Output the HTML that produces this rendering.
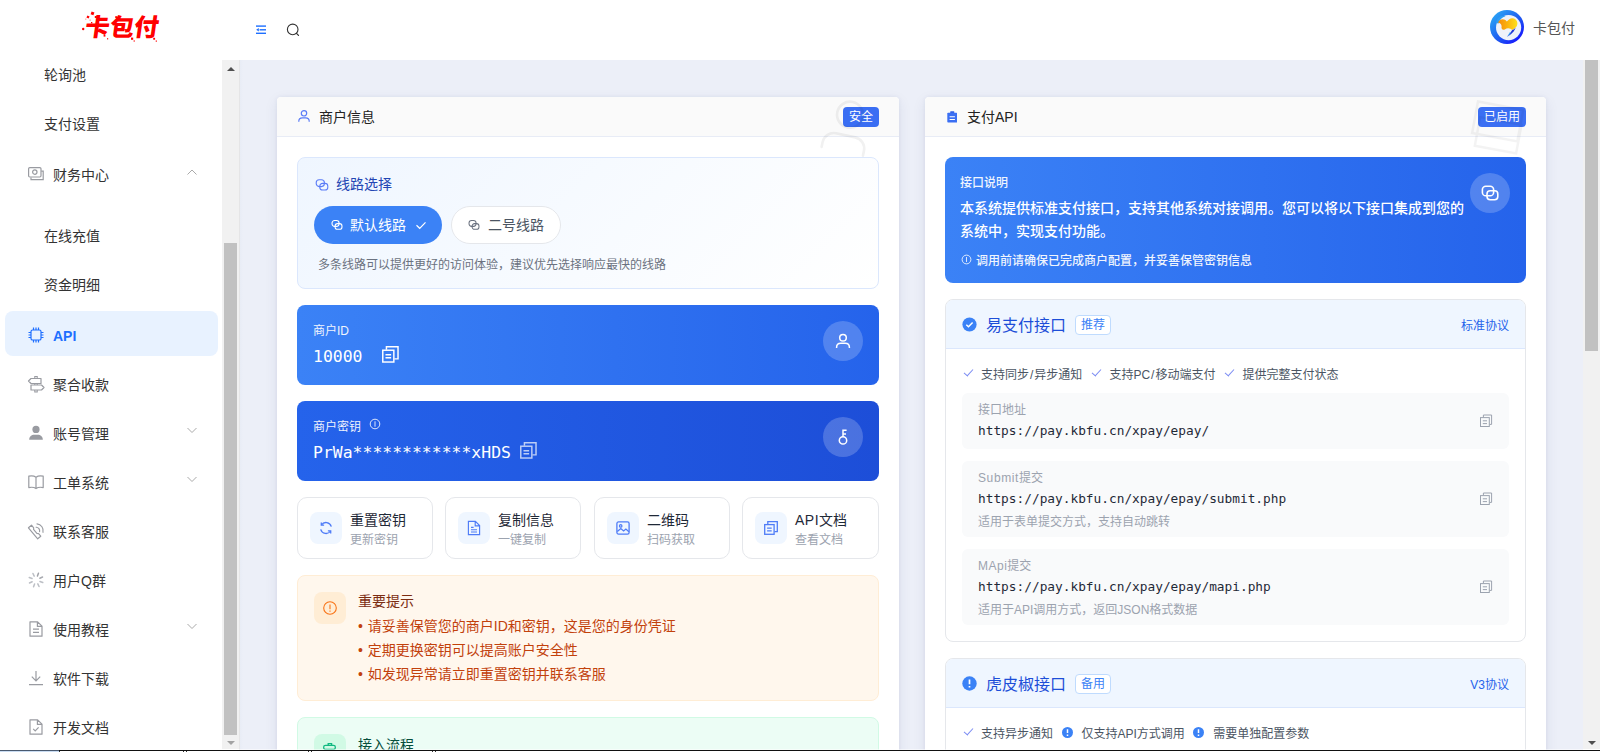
<!DOCTYPE html>
<html lang="zh-CN">
<head>
<meta charset="utf-8">
<title>卡包付 - API</title>
<style>
*{box-sizing:border-box;margin:0;padding:0}
html,body{width:1600px;height:752px;overflow:hidden;background:#fff}
body{position:relative;font-family:"Liberation Sans","Noto Sans CJK SC",sans-serif;font-size:14px;color:#333;-webkit-font-smoothing:antialiased}
.mono{font-family:"DejaVu Sans Mono","Liberation Mono",monospace}
svg{display:block}
.abs{position:absolute}

/* header */
#hdr{position:absolute;left:0;top:0;width:1600px;height:60px;background:#fff;z-index:5}
#logo{position:absolute;left:85px;top:8px;width:84px;height:40px;line-height:40px;font-family:"Liberation Sans","Noto Sans CJK SC",sans-serif;font-weight:900;font-size:24.500px;color:#f00;letter-spacing:0;white-space:nowrap;transform:skewX(-8deg)}
#uname{position:absolute;left:1533px;top:18px;font-size:14px;line-height:20px;color:#555}

/* sidebar */
#side{position:absolute;left:0;top:60px;width:222px;height:689px;background:#fff;overflow:hidden}
.mi{position:absolute;left:5px;width:213px;height:45px;line-height:44px;font-size:14px;color:#333;border-radius:8px}
.mi .tx{position:absolute;left:48px;top:3px;white-space:nowrap}
.mi.sub .tx{left:39px}
.mi .ic{position:absolute;left:22px;top:15px;width:18px;height:18px}
.mi .ar{position:absolute;left:181px;top:17px;width:12px;height:10px}
.mi.act{background:#e8f2ff;color:#1e6fff;font-weight:bold}
.sbar{position:absolute;background:#f1f1f1}
.sbar i{position:absolute;background:#c1c1c1;display:block}
.tri-u,.tri-d{position:absolute;width:0;height:0;border-left:4px solid transparent;border-right:4px solid transparent}
.tri-u{border-bottom:4px solid #505050}
.tri-d{border-top:4px solid #a3a3a3}

/* main */
#main{position:absolute;left:239px;top:60px;width:1344px;height:690px;background:#eceff8;overflow:hidden}
#main:before{content:"";position:absolute;left:0;top:0;width:4px;height:100%;background:linear-gradient(90deg,#e5e5e6 0,#e5e5e6 1px,#e8ecf6 1px,#eceff8 4px)}
.card{overflow:hidden;position:absolute;top:37px;height:760px;background:#fff;border-radius:4px;box-shadow:0 4px 14px rgba(40,50,100,.085),0 0 4px rgba(40,50,100,.06)}
.chd{position:absolute;left:0;top:0;right:0;height:40px;background:#fafafa;border-bottom:1px solid #e8ecf6;border-radius:4px 4px 0 0}
.chd .t{position:absolute;left:42px;top:1px;line-height:39px;font-size:14px;color:#222}
.chd .i{position:absolute;left:20px;top:12px;width:14px;height:14px}
.badge{position:absolute;top:10px;height:20px;line-height:20px;padding:0 6px;font-size:12px;color:#fff;background:#3b6ff3;border-radius:4px}
.linebox{position:absolute;left:20px;top:60px;width:582px;height:132px;border:1px solid #dbe7fd;border-radius:8px;background:linear-gradient(135deg,#eff6ff 0%,#fff 100%)}
.lbtn{position:absolute;top:48px;height:38px;border-radius:19px;line-height:38px;font-size:14px;color:#4b5563;background:#fff;border:1px solid #e5e7eb;white-space:nowrap}
.lbtn.on{background:#3b82f6;border:0;color:#fff}
.bcard{position:absolute;left:20px;width:582px;height:80px;border-radius:8px;color:#fff}
.bcard .lb{font-size:12px;line-height:18px;opacity:.92;white-space:nowrap}
.bcard .val{font-size:16.450px;line-height:24px;white-space:nowrap}
.bcard .rc{position:absolute;left:526px;top:16px;width:40px;height:40px;border-radius:50%;background:rgba(255,255,255,.2);display:flex;align-items:center;justify-content:center}
.abtn{position:absolute;top:400px;width:136px;height:62px;border:1px solid #e5e7eb;border-radius:10px;background:#fff}
.abtn .ib{position:absolute;left:12px;top:14px;width:32px;height:32px;border-radius:8px;background:#eff6ff;display:flex;align-items:center;justify-content:center}
.abtn .t1{position:absolute;left:52px;top:11px;line-height:22px;font-size:14px;color:#1f2937;white-space:nowrap}
.abtn .t2{position:absolute;left:52px;top:33px;line-height:18px;font-size:12px;color:#9ca3af;white-space:nowrap}
.bu{margin-right:1px}
.note{position:absolute;left:20px;width:582px;border:1px solid;border-radius:8px}
.note .nb{position:absolute;left:16px;top:16px;width:32px;height:32px;border-radius:8px;display:flex;align-items:center;justify-content:center}
.sec{position:absolute;left:20px;width:581px;border:1px solid #e5e7eb;border-radius:8px;background:#fff;overflow:hidden}
.sec .sh{position:absolute;left:0;top:0;right:0;height:49px;background:#eff6ff;border-bottom:1px solid #dbe7fd}
.tag{position:absolute;top:15px;height:20px;line-height:18px;padding:0 5px;font-size:12px;color:#3b82f6;background:#fff;border:1px solid #bfdbfe;border-radius:4px;white-space:nowrap}
.ft{position:absolute;left:17px;height:20px;line-height:20px;font-size:12px;color:#4b5563;white-space:nowrap}
.ft i{display:inline-block;vertical-align:top;width:10px;height:20px;margin-right:8px;position:relative}
.ft .sl{padding:0 1px}
.ft i.g{margin-left:9px}
.ft i.ck:before{content:"";position:absolute;left:1px;top:4px;width:8px;height:4px;border-left:1px solid #7b8cf3;border-bottom:1px solid #7b8cf3;transform:rotate(-48deg)}
.ft svg.ex{display:inline-block;vertical-align:top;margin:2.500px 9px 0 8.500px}
.ub{position:absolute;left:16px;width:547px;background:#f9fafb;border-radius:6px}
.ub .l{position:absolute;left:16px;top:8px;line-height:18px;font-size:12px;color:#9ca3af;white-space:nowrap}
.ub .u{position:absolute;left:16px;top:27px;line-height:22px;font-size:12.800px;color:#1f2937;white-space:nowrap}
.ub .d{position:absolute;left:16px;top:52px;line-height:18px;font-size:12px;color:#9ca3af;white-space:nowrap}
.ub .cp{position:absolute;left:517px;top:50%;margin-top:-7px;width:14px;height:14px}

#bot{position:absolute;left:0;top:750px;width:1600px;height:2px;background:#fff;z-index:9}
#bot:before{content:"";position:absolute;left:0;top:0;width:1600px;height:1px;background:#111}
#bot b{position:absolute;top:1px;height:1px;width:1px;background:#333}
</style>
</head>
<body>

<div id="hdr">
  <div id="logo">卡包付</div>
  <svg class="abs" style="left:80px;top:10px" width="82" height="34" viewBox="80 10 82 34" fill="#f00"><g transform="rotate(20 92.500 13.400)"><rect x="91" y="11.900" width="3" height="3"/></g><g transform="rotate(25 88 17)"><rect x="86.800" y="15.800" width="2.400" height="2.400"/></g><rect x="94.800" y="16" width="2" height="2"/><circle cx="83.200" cy="29" r="1.200"/><rect x="91" y="22" width="1.300" height="1.300"/><rect x="89.600" y="19.600" width="1" height="1" opacity=".7"/><rect x="85.300" y="18.600" width="1" height="1" opacity=".6"/><rect x="103.600" y="34.800" width="1.800" height="1.800"/><rect x="107" y="38.200" width="1.200" height="1.200"/><rect x="131" y="37.600" width="2.200" height="2.200"/><rect x="133.600" y="40.400" width="1.200" height="1.200"/><rect x="153.200" y="37.800" width="1.900" height="1.900"/><rect x="155.700" y="40.500" width="1.200" height="1.200"/><rect x="115.200" y="16.200" width="1.800" height="1.800"/></svg>
  <svg class="abs" style="left:255px;top:24px" width="12" height="12" viewBox="0 0 12 12"><g fill="#1e6fff"><rect x="1" y="1.4" width="10" height="1.4"/><rect x="4.6" y="5.1" width="6.4" height="1.4"/><rect x="1" y="8.6" width="10" height="1.4"/><path d="M1.2 5.8L3.8 4v3.6z"/></g></svg>
  <svg class="abs" style="left:285px;top:22px" width="16" height="16" viewBox="0 0 16 16"><circle cx="7.7" cy="7.4" r="5.3" fill="none" stroke="#333" stroke-width="1.1"/><path d="M11.5 11.3l2 2" stroke="#333" stroke-width="1.2" stroke-linecap="round"/></svg>
  <svg class="abs" style="left:1490px;top:10px" width="34" height="34" viewBox="0 0 34 34"><defs><linearGradient id="avr" x1="0.1" y1="0.1" x2="0.9" y2="0.9"><stop offset="0" stop-color="#2aa6f5"/><stop offset=".55" stop-color="#1f5cf0"/><stop offset="1" stop-color="#1512ff"/></linearGradient><linearGradient id="avh" x1="0" y1="0" x2="1" y2="0"><stop offset="0" stop-color="#f58a0c"/><stop offset=".5" stop-color="#fbb40f"/><stop offset="1" stop-color="#ffe11a"/></linearGradient></defs><circle cx="17" cy="17" r="17" fill="url(#avr)"/><circle cx="18.600" cy="17.600" r="12.600" fill="#eff2f9"/><path d="M6 13C6.500 7.500 11.500 4.500 15.500 6.200 12 7 9.600 9.600 8.600 13.400z" fill="#2b9df4"/><path d="M8 12.600C9.500 8.600 14.600 8 16.800 11.400L19 9.400C22 7 27 8.400 27.400 13 27.500 16.800 25 18.200 22.200 20 20.400 18 17.400 17.400 14.800 19.400 12.800 20.600 11 19.200 11.600 16.600 11.800 14.200 9.800 13 8 12.600z" fill="url(#avh)"/><path d="M22.200 20C20.400 23 18.800 25 17 26.800 21 24.600 24.600 21.400 25.600 17.400 24.600 19 23.200 19.600 22.200 20z" fill="#2336d6"/><path d="M17 26.800c1-1.400 2-3 2.800-4.600l1.200.4c-1 1.600-2.400 3-4 4.200z" fill="#3fb3f7"/></svg>
  <div id="uname">卡包付</div>
</div>

<div id="side">
<div class="mi sub" style="top:-10px"><span class="tx">轮询池</span></div>
<div class="mi sub" style="top:39px"><span class="tx">支付设置</span></div>
<div class="mi" style="top:90px"><svg class="ic" viewBox="0 0 18 18" fill="none" stroke="#999ba1" stroke-width="1.2"><rect x="1.6" y="2.6" width="12.4" height="9.4" rx="1.2"/><circle cx="7.8" cy="7.1" r="2.2"/><path d="M4 12.4v2.2h12.2V6.2h-2"/></svg><span class="tx">财务中心</span><svg class="ar" viewBox="0 0 12 10" fill="none" stroke="#aaa" stroke-width="1"><path d="M1.5 7.5L6 3l4.500 4.500"/></svg></div>
<div class="mi sub" style="top:151px"><span class="tx">在线充值</span></div>
<div class="mi sub" style="top:200px"><span class="tx">资金明细</span></div>
<div class="mi act" style="top:251px"><svg class="ic" viewBox="0 0 18 18" fill="none" stroke="#1e6fff" stroke-width="1.2"><rect x="4" y="4" width="10" height="10" rx="1.6"/><path d="M6.500 1.500V4M9 1.500V4M11.500 1.500V4M6.500 14v2.500M9 14v2.500M11.500 14v2.500M1.500 6.500H4M1.500 9H4M1.500 11.500H4M14 6.500h2.500M14 9h2.500M14 11.500h2.500"/></svg><span class="tx">API</span></div>
<div class="mi" style="top:300px"><svg class="ic" viewBox="0 0 18 18" fill="none" stroke="#999ba1" stroke-width="1.2"><path d="M7.800 3.500v-2h2.400v2M7.800 8.500V10M10.200 8.500V10M7.800 15v2h2.400v-2" stroke-width="1.100"/><path d="M4 3.500h10v5H4L1.500 6zM4 10h10.500l2.500 2.500-2.500 2.500H4z" stroke-linejoin="round"/></svg><span class="tx">聚合收款</span></div>
<div class="mi" style="top:349px"><svg class="ic" viewBox="0 0 18 18" fill="#999ba1"><circle cx="9" cy="5.400" r="3.600"/><path d="M2.200 15.800c0-3.200 2.400-5 5-5h3.600c2.600 0 5 1.800 5 5z"/></svg><span class="tx">账号管理</span><svg class="ar" viewBox="0 0 12 10" fill="none" stroke="#aaa" stroke-width="1"><path d="M1.500 2L6 6.500l4.500-4.500"/></svg></div>
<div class="mi" style="top:398px"><svg class="ic" viewBox="0 0 18 18" fill="none" stroke="#999ba1" stroke-width="1.200"><path d="M9 4.200C7 2.800 4.400 2.600 1.800 3.200v11.400c2.600-.6 5.200-.4 7.200 1 2-1.400 4.600-1.600 7.200-1V3.200C13.600 2.600 11 2.800 9 4.200zM9 4.200v11.400" stroke-linejoin="round"/></svg><span class="tx">工单系统</span><svg class="ar" viewBox="0 0 12 10" fill="none" stroke="#aaa" stroke-width="1"><path d="M1.500 2L6 6.500l4.500-4.500"/></svg></div>
<div class="mi" style="top:447px"><svg class="ic" viewBox="0 0 18 18" fill="none" stroke="#999ba1" stroke-width="1.150"><g transform="rotate(50 7.600 10)"><path d="M.4 8h3.400l1.200 1.200h5.200L11.400 8h3.400v4H.4z" stroke-linejoin="round"/></g><path d="M9.200 5.200a3.600 3.600 0 0 1 3.400 4.400M10 1.900a6.800 6.800 0 0 1 6 8.400" stroke-linecap="round"/></svg><span class="tx">联系客服</span></div>
<div class="mi" style="top:496px"><svg class="ic" viewBox="0 0 18 18" fill="none" stroke="#bcbfc5" stroke-width="1.500" stroke-linecap="round"><g transform="rotate(20 9 9)"><path d="M9 1.800v3" stroke="#a0a2a8"/><path d="M9 13.200v3M1.800 9h3M13.200 9h3M3.900 3.900l2.100 2.100M12 12l2.100 2.100M3.900 14.100l2.100-2.100" /><path d="M12 6l2.100-2.100" stroke="#a8aab0"/></g></svg><span class="tx">用户Q群</span></div>
<div class="mi" style="top:545px"><svg class="ic" viewBox="0 0 18 18" fill="none" stroke="#999ba1" stroke-width="1.200"><path d="M3 1.800h7.600L15 6.200v10H3zM10.400 2v4.400h4.400" stroke-linejoin="round"/><path d="M6 9.200h6M6 12.400h6"/></svg><span class="tx">使用教程</span><svg class="ar" viewBox="0 0 12 10" fill="none" stroke="#aaa" stroke-width="1"><path d="M1.500 2L6 6.500l4.500-4.500"/></svg></div>
<div class="mi" style="top:594px"><svg class="ic" viewBox="0 0 18 18" fill="none" stroke="#999ba1" stroke-width="1.200"><path d="M2 15.600h14M9 2v9.600M4.800 7.600L9 11.800l4.200-4.200"/></svg><span class="tx">软件下载</span></div>
<div class="mi" style="top:643px"><svg class="ic" viewBox="0 0 18 18" fill="none" stroke="#999ba1" stroke-width="1.200"><path d="M3 1.800h7.600L15 6.200v10H3zM10.400 2v4.400h4.400" stroke-linejoin="round"/><path d="M6.200 10.800l2 2 3.400-3.400"/></svg><span class="tx">开发文档</span></div>

</div>
<div class="sbar" style="left:222px;top:60px;width:17px;height:689px"><span class="tri-u" style="left:4.500px;top:7px"></span><i style="left:2px;top:183px;width:13px;height:492px"></i><span class="tri-d" style="left:4.500px;top:681px"></span></div>

<div id="main">
<div class="card" style="left:38px;width:622px">
  <div class="chd">
    <svg class="i" viewBox="0 0 14 14" fill="none" stroke="#5b7cf7" stroke-width="1.2"><circle cx="7" cy="4.300" r="2.700"/><path d="M1.800 12.800v-.6c0-2.200 1.700-3.400 3.600-3.400h3.200c1.900 0 3.600 1.200 3.600 3.400v.6"/></svg>
    <span class="t">商户信息</span>
    <span class="badge" style="left:566px">安全</span>
  </div>
  <svg class="abs wm" style="left:531px;top:-7px" width="78" height="78" viewBox="0 0 24 24" fill="none" stroke="#000" stroke-width=".8" opacity=".055"><g transform="rotate(12 12 12)"><circle cx="12" cy="7.500" r="4"/><path d="M5.500 19v-1.500c0-2 1.600-3.500 3.500-3.500h6c1.900 0 3.500 1.500 3.500 3.500V19" stroke-linecap="round"/></g></svg>

  <div class="linebox">
    <svg class="abs" style="left:17px;top:20px" width="14" height="14" viewBox="0 0 14 14" fill="none" stroke="#5b7cf7" stroke-width="1.100"><rect x="1.200" y="1.800" width="8.200" height="6.800" rx="3"/><rect x="4.800" y="5.400" width="8" height="6.600" rx="2.800"/></svg>
    <span class="abs" style="left:38px;top:16px;line-height:20px;font-size:14px;color:#2346b4">线路选择</span>
    <div class="lbtn on" style="left:16px;width:128px"><svg class="abs" style="left:17px;top:13px" width="12" height="12" viewBox="0 0 14 14" fill="none" stroke="#fff" stroke-width="1.300"><rect x="1.200" y="1.800" width="8.200" height="6.800" rx="3"/><rect x="4.800" y="5.400" width="8" height="6.600" rx="2.800"/></svg><span class="abs" style="left:36px;top:0">默认线路</span><svg class="abs" style="left:101px;top:13px" width="12" height="12" viewBox="0 0 12 12" fill="none" stroke="#fff" stroke-width="1.200"><path d="M1.500 6.300l3.200 3 5.800-6"/></svg></div>
    <div class="lbtn" style="left:153px;width:109.500px"><svg class="abs" style="left:16px;top:12px" width="12" height="12" viewBox="0 0 14 14" fill="none" stroke="#6b7280" stroke-width="1.200"><rect x="1.200" y="1.800" width="8.200" height="6.800" rx="3"/><rect x="4.800" y="5.400" width="8" height="6.600" rx="2.800"/></svg><span class="abs" style="left:36px;top:-1px">二号线路</span></div>
    <span class="abs" style="left:20px;top:98px;line-height:18px;font-size:12px;color:#6b7280;white-space:nowrap">多条线路可以提供更好的访问体验，建议优先选择响应最快的线路</span>
  </div>

  <div class="bcard" style="top:208px;background:linear-gradient(90deg,#3b82f6,#2563eb)">
    <span class="abs lb" style="left:16px;top:17px">商户ID</span>
    <span class="abs mono val" style="left:16px;top:39.500px">10000</span>
    <svg class="abs" style="left:83.500px;top:40px" width="18.800" height="18.800" viewBox="0 0 18 18" fill="none" stroke="#fff" stroke-width="1.400"><rect x="1.700" y="5" width="10.600" height="11.300"/><path d="M5.200 4.500V1.700h11.100v11.600h-3.500M4.300 9.300h5.400M4.300 12.300h5.400"/></svg>
    <div class="rc"><svg width="18" height="18" viewBox="0 0 18 18" fill="none" stroke="#fff" stroke-width="1.500"><circle cx="9" cy="5.800" r="3.300"/><path d="M2.600 16v-.8c0-2.600 2-4 4.200-4h4.400c2.200 0 4.200 1.400 4.200 4v.8"/></svg></div>
  </div>

  <div class="bcard" style="top:304px;background:linear-gradient(90deg,#2563eb,#1d4ed8)">
    <span class="abs lb" style="left:16px;top:17px">商户密钥</span>
    <svg class="abs" style="left:72px;top:17px" width="12" height="12" viewBox="0 0 12 12" fill="none" stroke="#fff" stroke-width="1" opacity=".85"><circle cx="6" cy="6" r="4.800"/><path d="M6 3.300v5.400"/></svg>
    <span class="abs mono val" style="left:16px;top:40px">PrWa************xHDS</span>
    <svg class="abs" style="left:222px;top:40px" width="18.800" height="18.800" viewBox="0 0 18 18" fill="none" stroke="#fff" stroke-width="1.400" opacity=".7"><rect x="1.700" y="5" width="10.600" height="11.300"/><path d="M5.200 4.500V1.700h11.100v11.600h-3.500M4.300 9.300h5.400M4.300 12.300h5.400"/></svg>
    <div class="rc"><svg width="18" height="18" viewBox="0 0 18 18" fill="none" stroke="#fff" stroke-width="1.500"><circle cx="9" cy="12.400" r="3.700"/><path d="M9 8.700V1.600M9 2.300h3.600M9 6h3"/></svg></div>
  </div>

  <div class="abtn" style="left:20px"><div class="ib"><svg width="16" height="16" viewBox="0 0 16 16" fill="none" stroke="#4f7cf7" stroke-width="1.300"><path d="M13.300 6.600A5.500 5.500 0 0 0 3.400 5M2.700 9.400a5.500 5.500 0 0 0 9.900 1.600"/><path d="M3.300 2.400V5.200h2.800M12.700 13.600v-2.800H9.900"/></svg></div><span class="t1">重置密钥</span><span class="t2">更新密钥</span></div>
  <div class="abtn" style="left:168px"><div class="ib"><svg width="16" height="16" viewBox="0 0 16 16" fill="none" stroke="#4f7cf7" stroke-width="1.300"><path d="M2.400 1.400h7l4.200 4.200v9H2.400zM9.200 1.600v4.200h4.200M5 7.400h2.600M5 9.700h6M5 12h6" stroke-width="1.150"/></svg></div><span class="t1">复制信息</span><span class="t2">一键复制</span></div>
  <div class="abtn" style="left:317px"><div class="ib"><svg width="16" height="16" viewBox="0 0 16 16" fill="none" stroke="#4f7cf7" stroke-width="1.300"><rect x="1.900" y="1.900" width="12.200" height="12.200" rx="1.600"/><circle cx="5.700" cy="5.900" r="1.200"/><path d="M2.300 11.600l3.500-3 2.800 2.400 2.300-2 3 2.700"/></svg></div><span class="t1">二维码</span><span class="t2">扫码获取</span></div>
  <div class="abtn" style="left:465px;width:137px"><div class="ib"><svg width="16" height="16" viewBox="0 0 16 16" fill="none" stroke="#4f7cf7" stroke-width="1.300"><rect x="1.700" y="4.600" width="9.400" height="9.700"/><path d="M4.800 4.200V1.700h9.500v9.900h-2.800M4.100 8.200h4.600M4.100 10.800h4.600"/></svg></div><span class="t1"><span style="letter-spacing:.5px">API</span>文档</span><span class="t2">查看文档</span></div>

  <div class="note" style="top:478px;height:126px;background:#fff7ed;border-color:#ffedd5">
    <div class="nb" style="background:#ffedd5"><svg width="16" height="16" viewBox="0 0 16 16" fill="none" stroke="#f97316" stroke-width="1.100"><circle cx="8" cy="8" r="6.300"/><path d="M8 4.400v4.800M8 10.600v1.200"/></svg></div>
    <span class="abs" style="left:60px;top:14px;line-height:22px;font-size:14px;color:#7c2d12">重要提示</span>
    <div class="abs" style="left:60px;top:38px;line-height:24px;font-size:14px;color:#c2410c;white-space:nowrap"><span class="bu">•</span> 请妥善保管您的商户ID和密钥，这是您的身份凭证<br><span class="bu">•</span> 定期更换密钥可以提高账户安全性<br><span class="bu">•</span> 如发现异常请立即重置密钥并联系客服</div>
  </div>

  <div class="note" style="top:620px;height:126px;background:#ecfdf5;border-color:#d1fae5">
    <div class="nb" style="background:#d1fae5"><svg width="16" height="16" viewBox="0 0 16 16" fill="none" stroke="#10b981" stroke-width="1.300"><rect x="1.700" y="3.400" width="11.600" height="4" rx="1.700"/><path d="M6.200 3.200V1.700h3.400v1.500"/></svg></div>
    <span class="abs" style="left:60px;top:16px;line-height:22px;font-size:14px;color:#064e3b">接入流程</span>
  </div>
</div>

<div class="card" style="left:686px;width:621px">
  <div class="chd">
    <svg class="i" style="left:21.600px;top:13.900px;width:10.500px;height:12px" viewBox="0 0 10.500 12"><rect x="3.200" y=".2" width="4.100" height="1.800" rx=".6" fill="#2f5fe3"/><rect x=".3" y="1.700" width="9.900" height="9.900" rx=".8" fill="#3b6ff3"/><path d="M2.600 5.700h5.300M2.600 8.500h5.300" stroke="#fff" stroke-width="1.100"/></svg>
    <span class="t">支付API</span>
    <span class="badge" style="left:553px;width:48px;text-align:center">已启用</span>
  </div>
  <svg class="abs wm" style="left:530px;top:-10px" width="100" height="80" viewBox="0 0 100 80" fill="none" stroke="#000" stroke-width="2.400" opacity=".045"><g transform="translate(23 14.500) rotate(10.600)"><rect x="0" y="0" width="46" height="32"/><rect x="5" y="15" width="42" height="29"/></g></svg>

  <div class="bcard" style="top:60px;width:581px;height:126px;background:linear-gradient(90deg,#3b82f6,#2563eb)">
    <span class="abs" style="left:15px;top:17px;font-size:12px;line-height:18px;opacity:.92;font-weight:500">接口说明</span>
    <div class="abs" style="left:15px;top:40px;font-size:14px;line-height:22.600px;font-weight:500;white-space:nowrap">本系统提供标准支付接口，支持其他系统对接调用。您可以将以下接口集成到您的<br>系统中，实现支付功能。</div>
    <svg class="abs" style="left:16px;top:97px" width="11" height="11" viewBox="0 0 12 12" fill="none" stroke="#fff" stroke-width="1" opacity=".9"><circle cx="6" cy="6" r="4.800"/><path d="M6 3.300v5.400"/></svg>
    <span class="abs" style="left:31px;top:94.500px;font-size:12px;line-height:18px;opacity:.92;font-weight:500;white-space:nowrap">调用前请确保已完成商户配置，并妥善保管密钥信息</span>
    <div class="rc" style="left:525px;top:16px"><svg width="20" height="20" viewBox="0 0 20 20" fill="none" stroke="#fff" stroke-width="1.600"><rect x="2.400" y="3.200" width="11.200" height="9.600" rx="3.400"/><rect x="7" y="7.800" width="10.800" height="9" rx="3.200"/></svg></div>
  </div>

  <div class="sec" style="top:202px;height:343px">
    <div class="sh">
      <svg class="abs" style="left:16px;top:17px" width="15" height="15" viewBox="0 0 15 15"><circle cx="7.500" cy="7.500" r="7.100" fill="#3b82f6"/><path d="M4.300 7.700l2.200 2.100 4.100-4.200" fill="none" stroke="#fff" stroke-width="1.500"/></svg>
      <span class="abs" style="left:40px;top:13.500px;font-size:16px;line-height:24px;color:#1d4ed8;white-space:nowrap">易支付接口</span>
      <span class="tag" style="left:129px">推荐</span>
      <span class="abs" style="right:16px;top:16.500px;font-size:12px;line-height:18px;color:#2563eb;white-space:nowrap">标准协议</span>
    </div>
    <div class="ft" style="top:65px"><i class="ck"></i>支持同步<span class="sl">/</span>异步通知<i class="ck g"></i>支持PC<span class="sl">/</span>移动端支付<i class="ck g"></i>提供完整支付状态</div>
    <div class="ub" style="top:93px;height:56px"><span class="l">接口地址</span><span class="u mono">https://pay.kbfu.cn/xpay/epay/</span><svg class="cp" viewBox="0 0 14 14" fill="none" stroke="#9ca3af" stroke-width="1"><rect x="1.500" y="3.600" width="8.800" height="8.900"/><path d="M4.400 3.300V1h8.200v9.400h-2M3.800 6.800h4.200M3.800 9.600h4.200"/></svg></div>
    <div class="ub" style="top:161px;height:76px"><span class="l"><span style="letter-spacing:.6px">Submit</span>提交</span><span class="u mono">https://pay.kbfu.cn/xpay/epay/submit.php</span><span class="d">适用于表单提交方式，支持自动跳转</span><svg class="cp" viewBox="0 0 14 14" fill="none" stroke="#9ca3af" stroke-width="1"><rect x="1.500" y="3.600" width="8.800" height="8.900"/><path d="M4.400 3.300V1h8.200v9.400h-2M3.800 6.800h4.200M3.800 9.600h4.200"/></svg></div>
    <div class="ub" style="top:249px;height:76px"><span class="l"><span style="letter-spacing:.5px">MApi</span>提交</span><span class="u mono">https://pay.kbfu.cn/xpay/epay/mapi.php</span><span class="d">适用于API调用方式，返回JSON格式数据</span><svg class="cp" viewBox="0 0 14 14" fill="none" stroke="#9ca3af" stroke-width="1"><rect x="1.500" y="3.600" width="8.800" height="8.900"/><path d="M4.400 3.300V1h8.200v9.400h-2M3.800 6.800h4.200M3.800 9.600h4.200"/></svg></div>
  </div>

  <div class="sec" style="top:561px;height:240px">
    <div class="sh">
      <svg class="abs" style="left:16px;top:17px" width="15" height="15" viewBox="0 0 15 15"><circle cx="7.500" cy="7.500" r="7.200" fill="#3b82f6"/><path d="M7.500 3.600v4.600M7.500 10v1.600" fill="none" stroke="#fff" stroke-width="1.700"/></svg>
      <span class="abs" style="left:40px;top:13.500px;font-size:16px;line-height:24px;color:#1d4ed8;white-space:nowrap">虎皮椒接口</span>
      <span class="tag" style="left:129px">备用</span>
      <span class="abs" style="right:16px;top:16.500px;font-size:12px;line-height:18px;color:#2563eb;white-space:nowrap">V3协议</span>
    </div>
    <div class="ft" style="top:65px"><i class="ck"></i>支持异步通知<svg class="ex" width="11" height="11" viewBox="0 0 11 11"><circle cx="5.500" cy="5.500" r="5.500" fill="#3b82f6"/><path d="M5.500 2.300v3.800M5.500 7.600v1.300" stroke="#fff" stroke-width="1.500"/></svg>仅支持API方式调用<svg class="ex" width="11" height="11" viewBox="0 0 11 11"><circle cx="5.500" cy="5.500" r="5.500" fill="#3b82f6"/><path d="M5.500 2.300v3.800M5.500 7.600v1.300" stroke="#fff" stroke-width="1.500"/></svg>需要单独配置参数</div>
  </div>
</div>

</div>
<div class="sbar" style="left:1583px;top:60px;width:17px;height:689px"><i style="left:2px;top:0;width:13px;height:290.500px"></i><span class="tri-d" style="left:4.500px;top:681px;border-top-color:#505050"></span></div>

<div class="abs" style="left:0;top:749px;width:1600px;height:1px;background:rgba(255,255,255,.5);z-index:8"></div>
<div id="bot"><span class="abs" style="left:0;top:0;width:59px;height:1px;background:#4a5a70;z-index:1"></span><span class="abs" style="left:0;top:1px;width:59px;height:1px;background:#c9dcf2"></span><b style="left:59px"></b><b style="left:183px"></b><b style="left:186px"></b><b style="left:308px"></b><b style="left:311px"></b><b style="left:432px"></b><b style="left:435px"></b></div>
</body>
</html>
